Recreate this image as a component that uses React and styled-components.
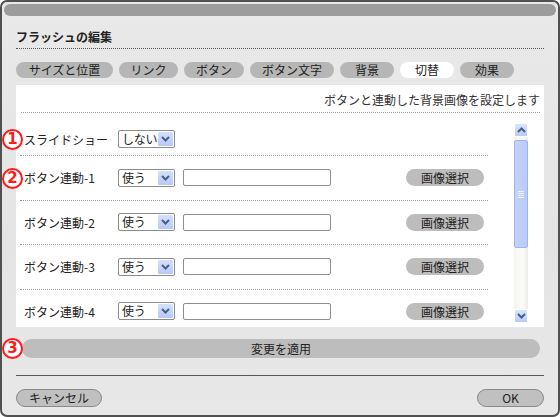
import React from 'react';
import styled, { createGlobalStyle } from 'styled-components';

const GlobalStyle = createGlobalStyle`
  html, body {
    margin: 0;
    padding: 0;
    background: #ffffff;
  }
  body {
    font-family: "Noto Sans CJK JP", "DejaVu Sans", sans-serif;
    font-size: 12px;
    color: #222;
  }
`;

const Frame = styled.div`
  position: relative;
  width: 560px;
  height: 417px;
  box-sizing: border-box;
  border: 2px solid #505050;
  border-radius: 7px;
  background: linear-gradient(180deg, #e9e9e9 0%, #e4e4e4 60%, #e8e8e8 100%);
  padding: 2px 2px 0;
  display: flex;
  flex-direction: column;
  overflow: hidden;
`;

const TopBar = styled.div`
  height: 12px;
  border-radius: 6px;
  background: #9c9c9c;
`;

const Body = styled.div`
  padding: 0 12px;
  display: flex;
  flex-direction: column;
`;

const Title = styled.h1`
  margin: 13px 0 0;
  height: 16px;
  line-height: 16px;
  padding-bottom: 3px;
  border-bottom: 1px dotted #555;
  font-size: 12px;
  font-weight: bold;
  color: #222;
`;

const TabRow = styled.div`
  display: flex;
  margin-top: 13px;
`;

const Tab = styled.div`
  width: ${p => p.w}px;
  margin-right: ${p => p.gap}px;
  height: 16px;
  line-height: 16px;
  border-radius: 8px;
  text-align: center;
  font-size: 12px;
  background: ${p => (p.active ? '#ffffff' : '#b6b6b6')};
  color: #222;
`;

const Panel = styled.div`
  margin-top: 7px;
  height: 242px;
  background: #fff;
  display: flex;
  flex-direction: column;
  overflow: hidden;
`;

const PanelHead = styled.div`
  margin: 0 4px 0 5px;
  padding-top: 7px;
  height: 20px;
  line-height: 16px;
  text-align: right;
  border-bottom: 1px dotted #9a9a9a;
  color: #333;
`;

const ListArea = styled.div`
  display: flex;
  padding-top: 10px;
  flex: 1;
  min-height: 0;
`;

const Rows = styled.div`
  width: 468px;
  margin-left: 4px;
`;

const Row = styled.div`
  height: ${p => (p.first ? '32px' : '43.5px')};
  display: flex;
  align-items: center;
  border-bottom: 1px dotted #9a9a9a;
  &:last-child {
    border-bottom: none;
  }
`;

const Label = styled.div`
  width: 94px;
  padding-left: 4px;
  color: #222;
  white-space: nowrap;
`;

const Select = styled.div`
  width: 57px;
  height: 18px;
  box-sizing: border-box;
  border: 1px solid #8c8c8c;
  border-radius: 2px;
  background: #fff;
  display: flex;
  align-items: center;
  padding: 1px;
`;

const SelectText = styled.span`
  flex: 1;
  padding-left: 2px;
  line-height: 14px;
  white-space: nowrap;
  letter-spacing: -0.3px;
`;

const DropBtn = styled.div`
  flex: none;
  width: 15px;
  height: 14px;
  border-radius: 1px;
  background: linear-gradient(180deg, #d4e0fc 0%, #b7c9f7 100%);
  display: flex;
  align-items: center;
  justify-content: center;
`;

const TextInput = styled.div`
  width: 148px;
  height: 17px;
  box-sizing: border-box;
  margin-left: 8px;
  border: 1px solid #8e8e8e;
  border-radius: 2px;
  background: #fff;
`;

const PickButton = styled.div`
  margin-left: 75px;
  width: 78px;
  height: 17px;
  line-height: 17px;
  border-radius: 9px;
  background: #bdbdbd;
  text-align: center;
  color: #222;
`;

const ScrollBar = styled.div`
  width: 14px;
  margin-left: 26px;
  height: 200px;
  display: flex;
  flex-direction: column;
  background: linear-gradient(90deg, #f4f4ef 0%, #fbfbf8 60%, #eeeee8 100%);
`;

const ScrollBtn = styled.div`
  height: 14px;
  box-sizing: border-box;
  border: 1px solid #fff;
  background: linear-gradient(180deg, #d8e3fd 0%, #b9cbf8 100%);
  display: flex;
  align-items: center;
  justify-content: center;
  margin-top: ${p => (p.down ? 'auto' : '0')};
`;

const Thumb = styled.div`
  margin-top: 3px;
  height: 108px;
  box-sizing: border-box;
  border: 1px solid #9fb5ee;
  border-radius: 2px;
  background: linear-gradient(90deg, #c3d3fb 0%, #b8caf8 100%);
  display: flex;
  align-items: center;
  justify-content: center;
`;

const Grip = styled.div`
  width: 6px;
  height: 7px;
  background: repeating-linear-gradient(180deg, #eef3ff 0 1px, transparent 1px 2px);
`;

const ApplyButton = styled.div`
  margin: 12px 4px 0 6px;
  height: 19px;
  line-height: 19px;
  border-radius: 10px;
  background: #bdbdbd;
  text-align: center;
  color: #222;
`;

const Divider = styled.div`
  margin-top: 17px;
  height: 1px;
  background: #5a5a5a;
`;

const Footer = styled.div`
  margin-top: 13px;
  display: flex;
  justify-content: space-between;
`;

const FootButton = styled.div`
  width: ${p => p.w}px;
  height: 18px;
  box-sizing: border-box;
  line-height: 16px;
  border: 1px solid #8a8a8a;
  border-radius: 9px;
  background: #c0c0c0;
  text-align: center;
  color: #222;
`;

const Marker = styled.div`
  position: absolute;
  left: ${p => p.x}px;
  top: ${p => p.y}px;
  width: 17px;
  height: 17px;
  border: 2px solid #ff1a1a;
  border-radius: 50%;
  background: #fff;
  color: #ff1a1a;
  font-family: "DejaVu Sans", sans-serif;
  font-weight: bold;
  font-size: 15px;
  line-height: 17px;
  text-align: center;
`;

const Chevron = ({ up }) => (
  <svg width="9" height="6" viewBox="0 0 9 6">
    <path
      d={up ? 'M1 5 L4.5 1.5 L8 5' : 'M1 1 L4.5 4.5 L8 1'}
      fill="none"
      stroke="#4a5f86"
      strokeWidth="2"
    />
  </svg>
);

const tabs = [
  { label: 'サイズと位置', w: 97, gap: 6 },
  { label: 'リンク', w: 59, gap: 6 },
  { label: 'ボタン', w: 60, gap: 6 },
  { label: 'ボタン文字', w: 84, gap: 6 },
  { label: '背景', w: 54, gap: 6 },
  { label: '切替', w: 54, gap: 6, active: true },
  { label: '効果', w: 54, gap: 0 },
];

const SelectBox = ({ value }) => (
  <Select>
    <SelectText>{value}</SelectText>
    <DropBtn><Chevron /></DropBtn>
  </Select>
);

export default function App() {
  return (
    <>
      <GlobalStyle />
      <Frame>
        <TopBar />
        <Body>
          <Title>フラッシュの編集</Title>
          <TabRow>
            {tabs.map(t => (
              <Tab key={t.label} w={t.w} gap={t.gap} active={t.active}>{t.label}</Tab>
            ))}
          </TabRow>
          <Panel>
            <PanelHead>ボタンと連動した背景画像を設定します</PanelHead>
            <ListArea>
              <Rows>
                <Row first>
                  <Label>スライドショー</Label>
                  <SelectBox value="しない" />
                </Row>
                {[1, 2, 3, 4].map(n => (
                  <Row key={n}>
                    <Label>ボタン連動-{n}</Label>
                    <SelectBox value="使う" />
                    <TextInput />
                    <PickButton>画像選択</PickButton>
                  </Row>
                ))}
              </Rows>
              <ScrollBar>
                <ScrollBtn><Chevron up /></ScrollBtn>
                <Thumb><Grip /></Thumb>
                <ScrollBtn down><Chevron /></ScrollBtn>
              </ScrollBar>
            </ListArea>
          </Panel>
          <ApplyButton>変更を適用</ApplyButton>
          <Divider />
          <Footer>
            <FootButton w={86}>キャンセル</FootButton>
            <FootButton w={67}>OK</FootButton>
          </Footer>
        </Body>
        <Marker x={0} y={127}>1</Marker>
        <Marker x={0} y={166}>2</Marker>
        <Marker x={0} y={336}>3</Marker>
      </Frame>
    </>
  );
}
